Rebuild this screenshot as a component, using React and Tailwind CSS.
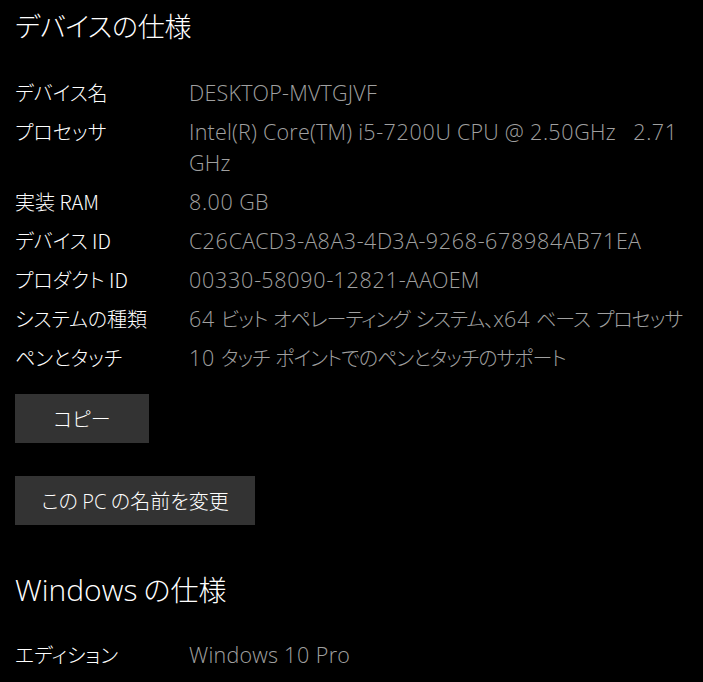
const font = { fontFamily: '"Noto Sans CJK JP", "Noto Sans", sans-serif' }
const latinFont = { fontFamily: '"Open Sans", "Noto Sans", sans-serif' }

const specs = [
  ['デバイス名', 'DESKTOP-MVTGJVF'],
  ['プロセッサ', 'Intel(R) Core(TM) i5-7200U CPU @ 2.50GHz\u00a0\u00a0 2.71 GHz'],
  ['実装 RAM', '8.00 GB'],
  ['デバイス ID', 'C26CACD3-A8A3-4D3A-9268-678984AB71EA'],
  ['プロダクト ID', '00330-58090-12821-AAOEM'],
  ['システムの種類', '64 ビット オペレーティング システム、x64 ベース プロセッサ'],
  ['ペンとタッチ', '10 タッチ ポイントでのペンとタッチのサポート'],
]

const cjk = /[\u3000-\u30ff\u4e00-\u9fff]/

// latin runs get a wider face, kana runs stay in the CJK font
function Mixed({ text }) {
  const parts = text.split(/([\u3000-\u30ff\u4e00-\u9fff]+|[0-9]+)/).filter(Boolean)
  return parts.map((p, i) => {
    if (cjk.test(p)) return <span key={i} className="tracking-[-0.05em]">{p}</span>
    const digits = /^[0-9]+$/.test(p)
    return (
      <span
        key={i}
        className={'text-[21.5px] leading-none ' + (digits ? 'tracking-[0.035em]' : 'tracking-[0.01em]')}
        style={latinFont}
      >
        {p}
      </span>
    )
  })
}

function Row({ label, value }) {
  return (
    <div className="flex text-[20px] leading-[31px]">
      <div className="w-[174px] shrink-0 text-white">{label}</div>
      <div className="w-[500px] text-[#a0a0a0]">
        <Mixed text={value} />
      </div>
    </div>
  )
}

export default function App() {
  return (
    <div
      className="min-h-screen bg-black pl-[15px] pt-[6px] font-light [font-feature-settings:'palt'] overflow-hidden"
      style={font}
    >
      <h1 className="text-[27px] leading-[40px] text-white tracking-[-0.01em]">デバイスの仕様</h1>

      <div className="mt-[31px] flex flex-col gap-[8px]">
        {specs.map(([l, v]) => (
          <Row key={l} label={l} value={v} />
        ))}
      </div>

      <div className="mt-[21px] flex flex-col items-start gap-[33px]">
        <button className="h-[49px] w-[134px] bg-[#333333] text-[20px] text-white">コピー</button>
        <button className="h-[49px] w-[240px] bg-[#333333] text-[20px] text-white">
          この <span className="leading-none" style={latinFont}>PC</span> の名前を変更
        </button>
      </div>

      <h2 className="mt-[44px] text-[28px] leading-[40px] text-white">
        <span className="text-[30px] leading-none" style={latinFont}>Windows</span> の仕様
      </h2>

      <div className="mt-[30px]">
        <Row label="エディション" value="Windows 10 Pro" />
      </div>
    </div>
  )
}
